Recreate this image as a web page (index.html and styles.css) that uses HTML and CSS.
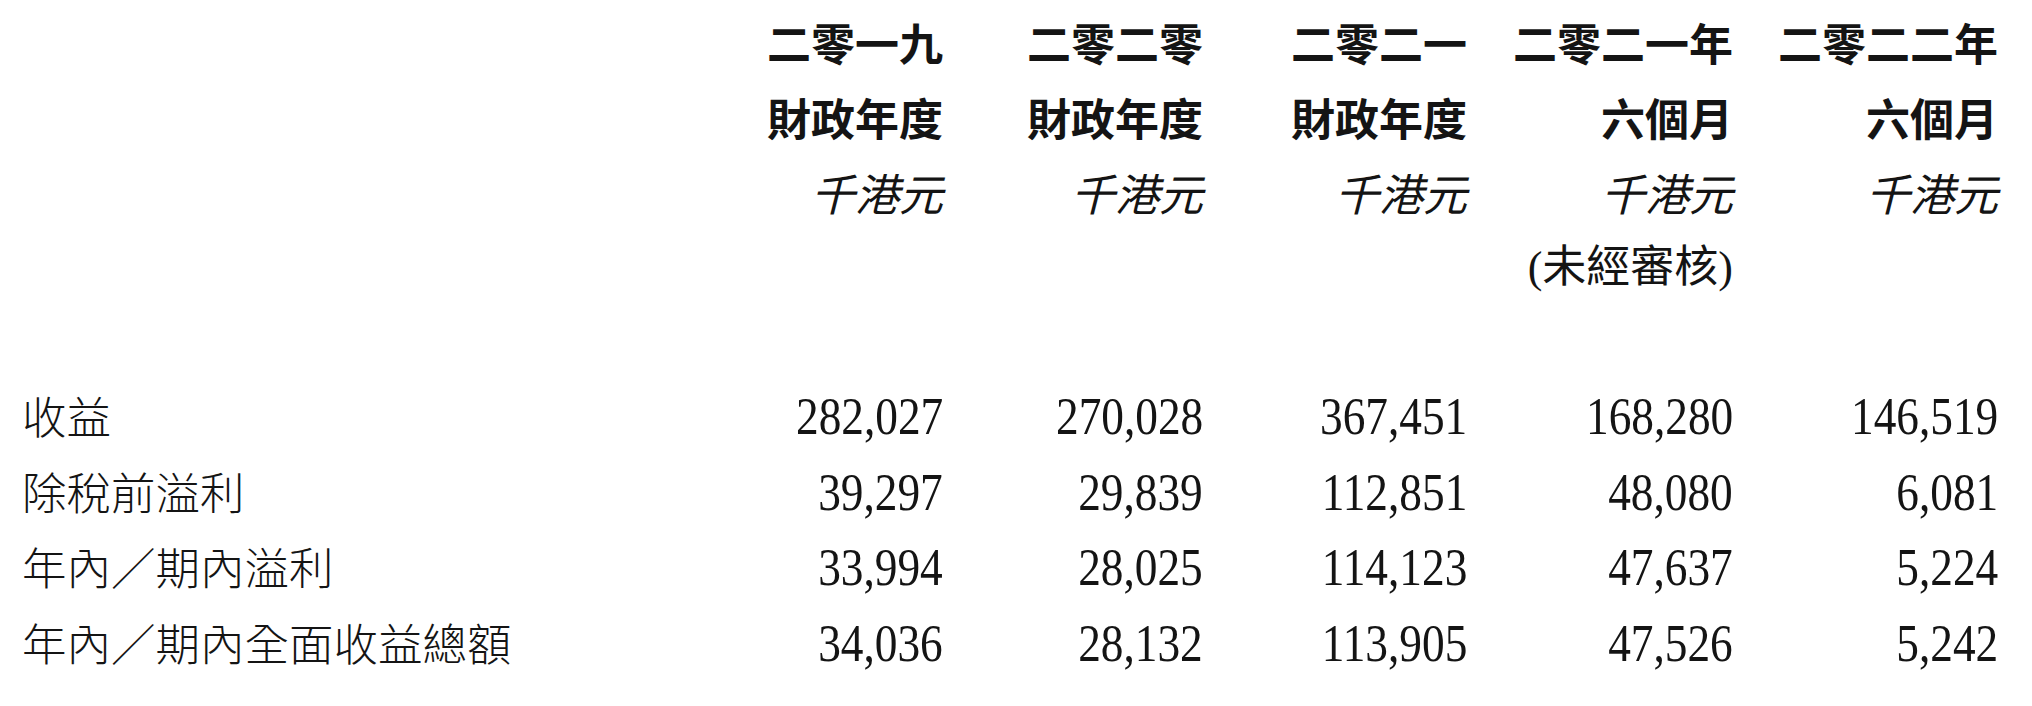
FILE: index.html
```html
<!DOCTYPE html>
<html lang="zh-Hant">
<head>
<meta charset="utf-8">
<title>財務摘要</title>
<link rel="stylesheet" href="styles.css">
</head>
<body>
<div class="sheet">
  <div class="row head">
    <div class="cell label"></div>
    <div class="cell col">
      <div class="hl bold">二零一九</div>
      <div class="hl bold">財政年度</div>
      <div class="hl unit">千港元</div>
    </div>
    <div class="cell col">
      <div class="hl bold">二零二零</div>
      <div class="hl bold">財政年度</div>
      <div class="hl unit">千港元</div>
    </div>
    <div class="cell col">
      <div class="hl bold">二零二一</div>
      <div class="hl bold">財政年度</div>
      <div class="hl unit">千港元</div>
    </div>
    <div class="cell col">
      <div class="hl bold">二零二一年</div>
      <div class="hl bold">六個月</div>
      <div class="hl unit">千港元</div>
      <div class="hl note">(未經審核)</div>
    </div>
    <div class="cell col">
      <div class="hl bold">二零二二年</div>
      <div class="hl bold">六個月</div>
      <div class="hl unit">千港元</div>
    </div>
  </div>

  <div class="body">
    <div class="row data first">
      <div class="cell label">收益</div>
      <div class="cell num"><span>282,027</span></div>
      <div class="cell num"><span>270,028</span></div>
      <div class="cell num"><span>367,451</span></div>
      <div class="cell num"><span>168,280</span></div>
      <div class="cell num"><span>146,519</span></div>
    </div>
    <div class="row data">
      <div class="cell label">除稅前溢利</div>
      <div class="cell num"><span>39,297</span></div>
      <div class="cell num"><span>29,839</span></div>
      <div class="cell num"><span>112,851</span></div>
      <div class="cell num"><span>48,080</span></div>
      <div class="cell num"><span>6,081</span></div>
    </div>
    <div class="row data">
      <div class="cell label">年內／期內溢利</div>
      <div class="cell num"><span>33,994</span></div>
      <div class="cell num"><span>28,025</span></div>
      <div class="cell num"><span>114,123</span></div>
      <div class="cell num"><span>47,637</span></div>
      <div class="cell num"><span>5,224</span></div>
    </div>
    <div class="row data">
      <div class="cell label">年內／期內全面收益總額</div>
      <div class="cell num"><span>34,036</span></div>
      <div class="cell num"><span>28,132</span></div>
      <div class="cell num"><span>113,905</span></div>
      <div class="cell num"><span>47,526</span></div>
      <div class="cell num"><span>5,242</span></div>
    </div>
  </div>
</div>
</body>
</html>
```

FILE: styles.css
```css
html, body {
  margin: 0;
  padding: 0;
  background: #ffffff;
}

body {
  width: 2032px;
  height: 706px;
  overflow: hidden;
  color: #141414;
  font-family: "Noto Sans CJK TC", "Noto Sans CJK SC", sans-serif;
}

.sheet {
  padding: 5px 0 0 22px;
}

.row {
  display: grid;
  grid-template-columns: 657px 264px 260px 264px 266px 265px;
}

.head {
  align-items: start;
}

.col {
  text-align: right;
}

.hl {
  line-height: 75px;
  font-size: 44px;
  white-space: nowrap;
}

.bold {
  font-weight: 700;
}

.unit {
  font-style: italic;
  font-weight: 400;
}

.note {
  font-family: "Liberation Serif", "Noto Sans CJK TC", serif;
  font-weight: 400;
  font-size: 44px;
}

.body {
  margin-top: 73px;
}

.data {
  align-items: baseline;
  line-height: 74.5px;
}

.label {
  font-size: 44.5px;
  font-weight: 300;
  white-space: nowrap;
}

.num {
  text-align: right;
  font-family: "Liberation Serif", "Times New Roman", serif;
  font-size: 53px;
}

.num span {
  display: inline-block;
  transform: scaleX(0.855);
  transform-origin: right center;
}
```
